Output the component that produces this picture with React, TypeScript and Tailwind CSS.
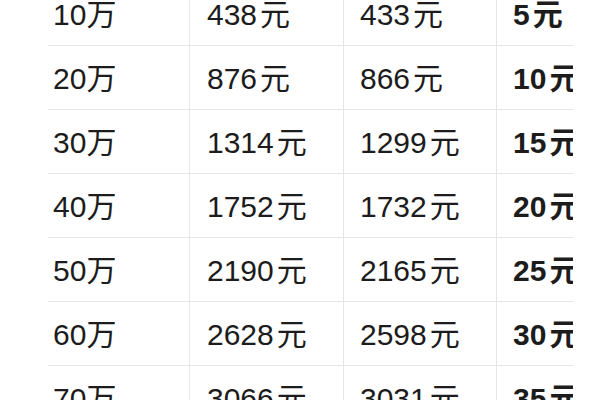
import React from "react";

const ROWS = [
  { amount: "10", a: "438", b: "433", diff: "5" },
  { amount: "20", a: "876", b: "866", diff: "10" },
  { amount: "30", a: "1314", b: "1299", diff: "15" },
  { amount: "40", a: "1752", b: "1732", diff: "20" },
  { amount: "50", a: "2190", b: "2165", diff: "25" },
  { amount: "60", a: "2628", b: "2598", diff: "30" },
  { amount: "70", a: "3066", b: "3031", diff: "35" },
];

function Yuan({ value }: { value: string }) {
  return (
    <>
      {value}
      <span className="ml-[3px]">元</span>
    </>
  );
}

export default function App() {
  return (
    <div
      className="w-[600px] h-[400px] overflow-hidden bg-white text-[#1c1c1c]"
      style={{ fontFamily: '"Liberation Sans", "Noto Sans CJK SC", sans-serif' }}
    >
      <div className="ml-[48px] mt-[-18px] w-[525px] overflow-hidden">
        {ROWS.map((row) => (
          <div
            key={row.amount}
            className="grid grid-cols-[141px_154px_153px_77px] h-[64px] border-b border-[#e6e6e6] text-[30px] leading-none"
          >
            <div className="flex items-center pl-[5px] pt-[3px]">{row.amount}万</div>
            <div className="flex items-center pl-[17px] pt-[3px] border-l border-[#e6e6e6]">
              <Yuan value={row.a} />
            </div>
            <div className="flex items-center pl-[16px] pt-[3px] border-l border-[#e6e6e6]">
              <Yuan value={row.b} />
            </div>
            <div className="flex items-center pl-[16px] pt-[3px] border-l border-[#e6e6e6] font-bold whitespace-nowrap overflow-hidden">
              <Yuan value={row.diff} />
            </div>
          </div>
        ))}
      </div>
    </div>
  );
}
